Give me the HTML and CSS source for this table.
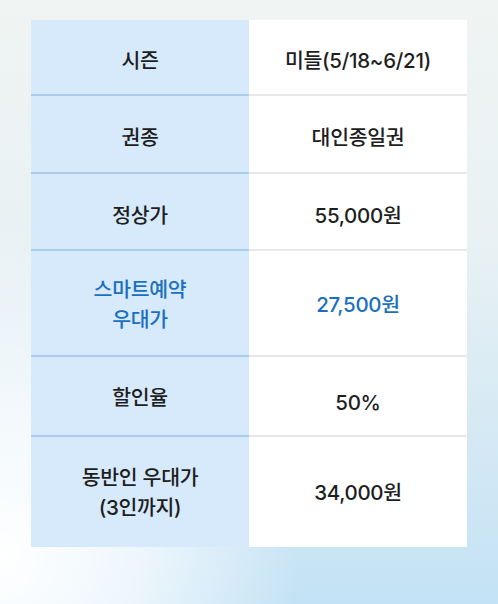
FILE: index.html
```html
<!DOCTYPE html>
<html lang="ko">
<head>
<meta charset="utf-8">
<title>요금표</title>
<link rel="stylesheet" href="styles.css">
</head>
<body>
<div class="page">
  <div class="price-table">
    <div class="row r1">
      <div class="cell label">시즌</div>
      <div class="cell value">미들(5/18~6/21)</div>
    </div>
    <div class="row r2">
      <div class="cell label">권종</div>
      <div class="cell value">대인종일권</div>
    </div>
    <div class="row r3">
      <div class="cell label">정상가</div>
      <div class="cell value">55,000원</div>
    </div>
    <div class="row r4 highlight">
      <div class="cell label">스마트예약<br>우대가</div>
      <div class="cell value">27,500원</div>
    </div>
    <div class="row r5">
      <div class="cell label">할인율</div>
      <div class="cell value shift">50%</div>
    </div>
    <div class="row r6 last">
      <div class="cell label">동반인 우대가<br>(3인까지)</div>
      <div class="cell value">34,000원</div>
    </div>
  </div>
</div>
</body>
</html>
```

FILE: styles.css
```css
html, body {
  margin: 0;
  padding: 0;
}
body {
  width: 498px;
  height: 604px;
  overflow: hidden;
  font-family: "Inter", "Noto Sans CJK KR", "Noto Sans", sans-serif;
  color: #1e1e1e;
  background:
    radial-gradient(ellipse 60% 55% at 0% 92%, #ffffff 0%, rgba(255,255,255,0.7) 45%, rgba(255,255,255,0) 100%),
    linear-gradient(to bottom, #f0f4f3 0%, #e8f1f3 40%, #c3e2f5 100%);
}
.page {
  padding: 20px 31px 0 31px;
}
.price-table {
  display: flex;
  flex-direction: column;
  width: 436px;
}
.row {
  display: grid;
  grid-template-columns: 218px 218px;
}
.cell {
  display: flex;
  align-items: center;
  justify-content: center;
  text-align: center;
  font-size: 20.5px;
  font-weight: 500;
  line-height: 30px;
  letter-spacing: -0.3px;
  box-sizing: border-box;
}
.label {
  background: #d7eafb;
  border-bottom: 2px solid #aacdee;
}
.value {
  background: #ffffff;
  border-bottom: 2px solid #e8e8e8;
}
.last .cell {
  border-bottom: none;
}
.r1 .cell { height: 76px; padding-top: 8px; }
.r2 .cell { height: 78px; padding-top: 8px; }
.r3 .cell { height: 77px; padding-top: 8px; }
.r4 .cell { height: 106px; padding-top: 4px; }
.r5 .cell { height: 80px; padding-top: 4px; }
.r5 .value.shift { padding-top: 14px; }
.r6 .cell { height: 110px; padding-top: 2px; }
.highlight .cell {
  color: #1b6fbf;
}
```
